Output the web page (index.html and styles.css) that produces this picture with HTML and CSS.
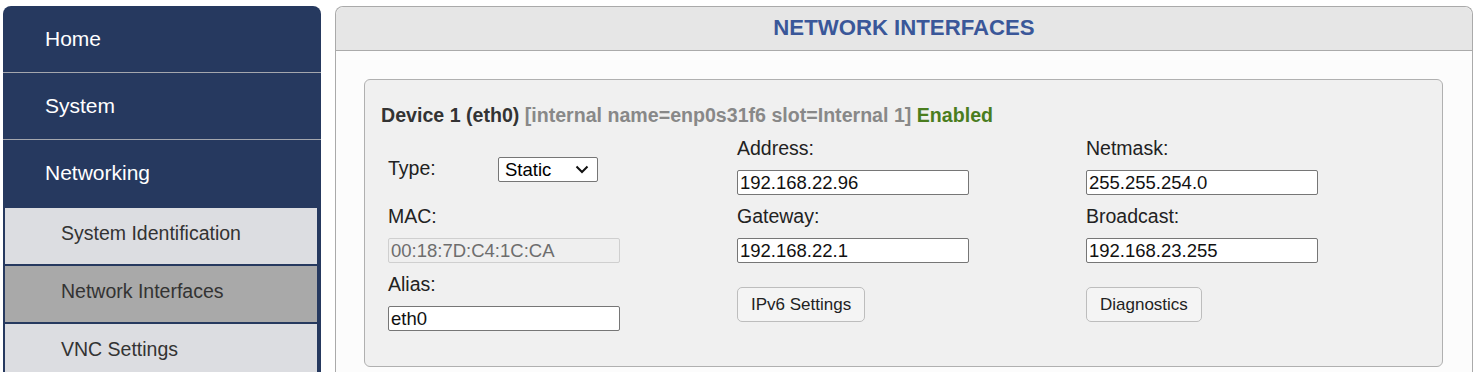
FILE: index.html
```html
<!DOCTYPE html>
<html>
<head>
    <meta charset="UTF-8">
    <title>Network Interfaces</title>
    <link rel="stylesheet" href="styles.css">
</head>
<body>
    <div class="page">
        <div class="sidebar">
            <div class="menu-item">Home</div>
            <div class="menu-item">System</div>
            <div class="menu-item">Networking</div>
            <div class="submenu-item">System Identification</div>
            <div class="submenu-item active">Network Interfaces</div>
            <div class="submenu-item">VNC Settings</div>
        </div>

        <div class="main">
            <div class="main-header">NETWORK INTERFACES</div>
            <div class="main-body">
                <div class="device">
                    <div class="device-title">
                        <span class="dev-name">Device 1 (eth0)</span>
                        <span class="dev-info">[internal name=enp0s31f6 slot=Internal 1]</span>
                        <span class="dev-state">Enabled</span>
                    </div>
                    <div class="device-grid">
                        <div class="col col-first">
                            <div class="type-row">
                                <span class="label">Type:</span>
                                <div class="select">Static
                                    <svg width="14" height="9" viewBox="0 0 14 9"><path d="M1.5 1.5 L7 7 L12.5 1.5" fill="none" stroke="#111" stroke-width="2"/></svg>
                                </div>
                            </div>
                            <div class="label">MAC:</div>
                            <div class="input disabled">00:18:7D:C4:1C:CA</div>
                            <div class="label">Alias:</div>
                            <div class="input">eth0</div>
                        </div>
                        <div class="col">
                            <div class="label">Address:</div>
                            <div class="input">192.168.22.96</div>
                            <div class="label">Gateway:</div>
                            <div class="input">192.168.22.1</div>
                            <div class="btn-row"><button class="btn">IPv6 Settings</button></div>
                        </div>
                        <div class="col">
                            <div class="label">Netmask:</div>
                            <div class="input">255.255.254.0</div>
                            <div class="label">Broadcast:</div>
                            <div class="input">192.168.23.255</div>
                            <div class="btn-row"><button class="btn">Diagnostics</button></div>
                        </div>
                    </div>
                </div>
                <div class="device next"></div>
            </div>
        </div>
    </div>
</body>
</html>
```

FILE: styles.css
```css
body {
    margin: 0;
    padding: 0;
    background-color: #ffffff;
    font-family: "Liberation Sans", Arial, sans-serif;
    overflow: hidden;
}

.page {
    display: flex;
    align-items: flex-start;
    padding: 6px 0 0 3px;
    gap: 14px;
}

/* Боковое меню */
.sidebar {
    width: 318px;
    height: 366px;
    flex-shrink: 0;
    background-color: #26395f;
    border-radius: 8px 8px 0 0;
    overflow: hidden;
}

.menu-item {
    height: 66px;
    line-height: 66px;
    padding-left: 42px;
    font-size: 21px;
    color: #ffffff;
    border-bottom: 1px solid #a4a7ae;
}

.menu-item:nth-child(3) {
    border-bottom: none;
}

.submenu-item {
    height: 56px;
    line-height: 50px;
    margin: 0 2px 0 0;
    padding-left: 56px;
    font-size: 19.5px;
    color: #333333;
    background-color: #dcdde1;
    border: 2px solid #26395f;
    border-bottom: none;
}

.submenu-item.active {
    background-color: #a9a9a9;
}

/* Основная панель */
.main {
    width: 1136px;
    height: 366px;
    overflow: hidden;
    border: 1px solid #aaaaaa;
    border-bottom: none;
    border-radius: 8px 8px 0 0;
    background-color: #fcfcfc;
}

.main-header {
    height: 43px;
    line-height: 42px;
    text-align: center;
    background-color: #e6e6e6;
    border-bottom: 1px solid #aaaaaa;
    border-radius: 8px 8px 0 0;
    color: #3a5799;
    font-weight: bold;
    font-size: 22.2px;
}

.main-body {
    padding: 28px 29px 0 28px;
}

.device {
    background-color: #f0f0f0;
    border: 1px solid #b0b0b0;
    border-radius: 6px;
    padding: 24px 0 25px 16px;
}

.device.next {
    margin-top: 13px;
    margin-left: 3px;
    height: 40px;
    padding: 0;
}

.device-title {
    font-size: 19.6px;
    font-weight: bold;
    line-height: 22px;
}

.dev-name {
    color: #333333;
}

.dev-info {
    color: #888888;
}

.dev-state {
    color: #4a7d1e;
}

.device-grid {
    display: grid;
    grid-template-columns: 349px 349px 349px;
    margin: 11px 0 0 7px;
}

.col {
    display: flex;
    flex-direction: column;
    align-items: flex-start;
}

.col-first {
    padding-top: 20px;
}

.label {
    font-size: 19.5px;
    line-height: 22px;
    color: #222222;
}

.type-row {
    display: flex;
    align-items: center;
    height: 25px;
    margin-bottom: 23px;
}

.type-row .label {
    width: 110px;
    margin-top: -4px;
}

.select {
    width: 92px;
    height: 23px;
    border: 1px solid #767676;
    border-radius: 2px;
    background-color: #ffffff;
    font-size: 18.5px;
    line-height: 23px;
    padding-left: 6px;
    display: flex;
    align-items: center;
    justify-content: space-between;
}

.select svg {
    margin-right: 8px;
}

.input {
    width: 228px;
    height: 23px;
    line-height: 23px;
    border: 1px solid #767676;
    border-radius: 2px;
    background-color: #ffffff;
    padding-left: 2px;
    font-size: 18.5px;
    color: #111111;
    margin: 11px 0 10px;
}

.input.disabled {
    background-color: #efefef;
    border-color: #cfcfcf;
    color: #6d6d6d;
}

.btn-row {
    margin-top: 14px;
}

.btn {
    height: 35px;
    padding: 0 13px;
    font-family: "Liberation Sans", Arial, sans-serif;
    font-size: 17px;
    color: #222222;
    background-color: #f4f4f4;
    border: 1px solid #bdbdbd;
    border-radius: 5px;
}
```
